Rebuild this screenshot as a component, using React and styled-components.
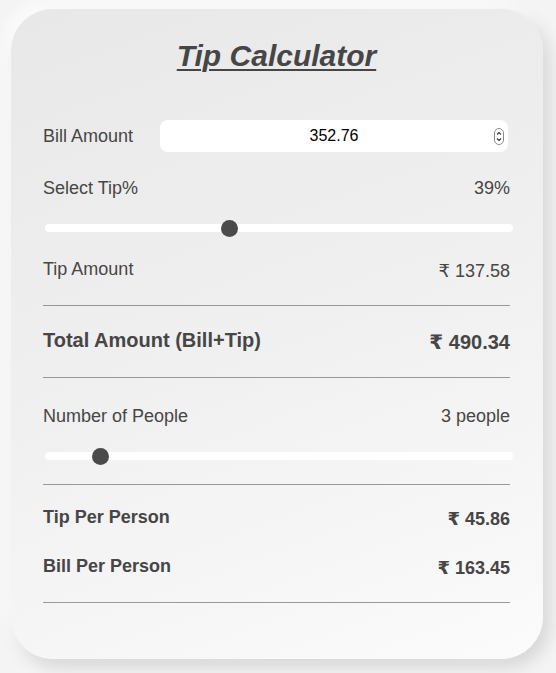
import React, { useState } from "react";
import styled, { createGlobalStyle } from "styled-components";

const GlobalStyles = createGlobalStyle`
  html, body {
    margin: 0;
    padding: 0;
    background-color: #f4f4f4;
    font-family: "Liberation Sans", Arial, "DejaVu Sans", sans-serif;
  }
`;

const Page = styled.div`
  padding: 9px 13px 14px 11px;
`;

const Card = styled.div`
  box-sizing: border-box;
  width: 532px;
  padding: 29px 33px 56px 32px;
  border-radius: 42px;
  background: linear-gradient(160deg, #e8e8e8 0%, #f0f0f0 50%, #fbfbfb 100%);
  box-shadow: 6px 8px 18px rgba(0, 0, 0, 0.13), -6px -6px 16px rgba(255, 255, 255, 0.9);
  color: #464646;
`;

const Title = styled.h1`
  margin: 0;
  text-align: center;
  font-size: 30px;
  line-height: 35px;
  font-style: italic;
  font-weight: 700;
  text-decoration: underline;
  text-underline-offset: 3px;
  text-decoration-thickness: 2px;
  color: #464646;
`;

const Row = styled.div`
  display: flex;
  align-items: center;
  justify-content: space-between;
  margin-top: ${(p) => p.$mt || 0}px;
  font-size: ${(p) => (p.$big ? 20 : 18)}px;
  line-height: ${(p) => (p.$big ? 24 : 22)}px;
  font-weight: ${(p) => (p.$bold ? 700 : 400)};
`;

const Label = styled.span`
  flex-shrink: 0;
  width: ${(p) => (p.$w ? `${p.$w}px` : "auto")};
`;

const Value = styled.span`
  text-align: right;
  white-space: nowrap;
  position: relative;
  top: ${(p) => (p.$low ? 2 : 0)}px;
`;

const InputWrap = styled.div`
  position: relative;
  flex: 1;
  height: 32px;
  margin-right: 2px;
`;

const NumberInput = styled.input`
  box-sizing: border-box;
  width: 100%;
  height: 32px;
  border: none;
  outline: none;
  border-radius: 8px;
  background: #fff;
  text-align: center;
  font-family: "Liberation Sans", Arial, sans-serif;
  font-size: 16px;
  color: #000;
  padding: 0 20px;
  appearance: textfield;
  -moz-appearance: textfield;

  &::-webkit-inner-spin-button,
  &::-webkit-outer-spin-button {
    -webkit-appearance: none;
    margin: 0;
  }
`;

const Stepper = styled.svg`
  position: absolute;
  right: 4px;
  top: 8px;
`;

const Slider = styled.input`
  -webkit-appearance: none;
  appearance: none;
  display: block;
  box-sizing: border-box;
  width: 468px;
  height: 16px;
  margin: ${(p) => p.$mt || 0}px 0 0 2px;
  background: transparent;
  outline: none;

  &::-webkit-slider-runnable-track {
    height: 8px;
    border-radius: 4px;
    background: #fff;
  }

  &::-webkit-slider-thumb {
    -webkit-appearance: none;
    width: 17px;
    height: 17px;
    margin-top: -4.5px;
    border-radius: 50%;
    background: #4a4a4a;
    border: none;
  }
`;

const Divider = styled.hr`
  margin: ${(p) => p.$mt || 0}px 0 0 0;
  border: none;
  border-top: 1px solid #999;
  height: 0;
`;

const rupee = (n) => `₹ ${n.toFixed(2)}`;

const App = () => {
  const [bill, setBill] = useState(352.76);
  const [tip, setTip] = useState(39);
  const [people, setPeople] = useState(3);

  const tipAmount = (bill * tip) / 100;
  const total = bill + tipAmount;

  return (
    <Page>
      <GlobalStyles />
      <Card>
        <Title>Tip Calculator</Title>

        <Row $mt={47}>
          <Label $w={117}>Bill Amount</Label>
          <InputWrap>
            <NumberInput
              type="number"
              value={bill}
              onChange={(e) => setBill(Number(e.target.value) || 0)}
            />
            <Stepper width="10" height="17" viewBox="0 0 10 17">
              <rect x="0.5" y="0.5" width="9" height="16" rx="4.5" fill="#fff" stroke="#8a8a8a" />
              <path d="M3 6.5 L5 4.5 L7 6.5" fill="none" stroke="#333" strokeWidth="1.1" />
              <path d="M3 10.5 L5 12.5 L7 10.5" fill="none" stroke="#333" strokeWidth="1.1" />
            </Stepper>
          </InputWrap>
        </Row>

        <Row $mt={25}>
          <Label>Select Tip%</Label>
          <Value>{tip}%</Value>
        </Row>
        <Slider
          type="range"
          min="0"
          max="100"
          value={tip}
          $mt={21}
          onChange={(e) => setTip(Number(e.target.value))}
        />

        <Row $mt={22}>
          <Label>Tip Amount</Label>
          <Value $low>{rupee(tipAmount)}</Value>
        </Row>
        <Divider $mt={25} />

        <Row $mt={22} $bold $big>
          <Label>Total Amount (Bill+Tip)</Label>
          <Value $low>{rupee(total)}</Value>
        </Row>
        <Divider $mt={25} />

        <Row $mt={27}>
          <Label>Number of People</Label>
          <Value>{people} people</Value>
        </Row>
        <Slider
          type="range"
          min="1"
          max="20"
          value={people}
          $mt={21}
          onChange={(e) => setPeople(Number(e.target.value))}
        />
        <Divider $mt={20} />

        <Row $mt={21} $bold>
          <Label>Tip Per Person</Label>
          <Value $low>{rupee(tipAmount / people)}</Value>
        </Row>
        <Row $mt={27} $bold>
          <Label>Bill Per Person</Label>
          <Value $low>{rupee(total / people)}</Value>
        </Row>
        <Divider $mt={25} />
      </Card>
    </Page>
  );
};

export default App;
